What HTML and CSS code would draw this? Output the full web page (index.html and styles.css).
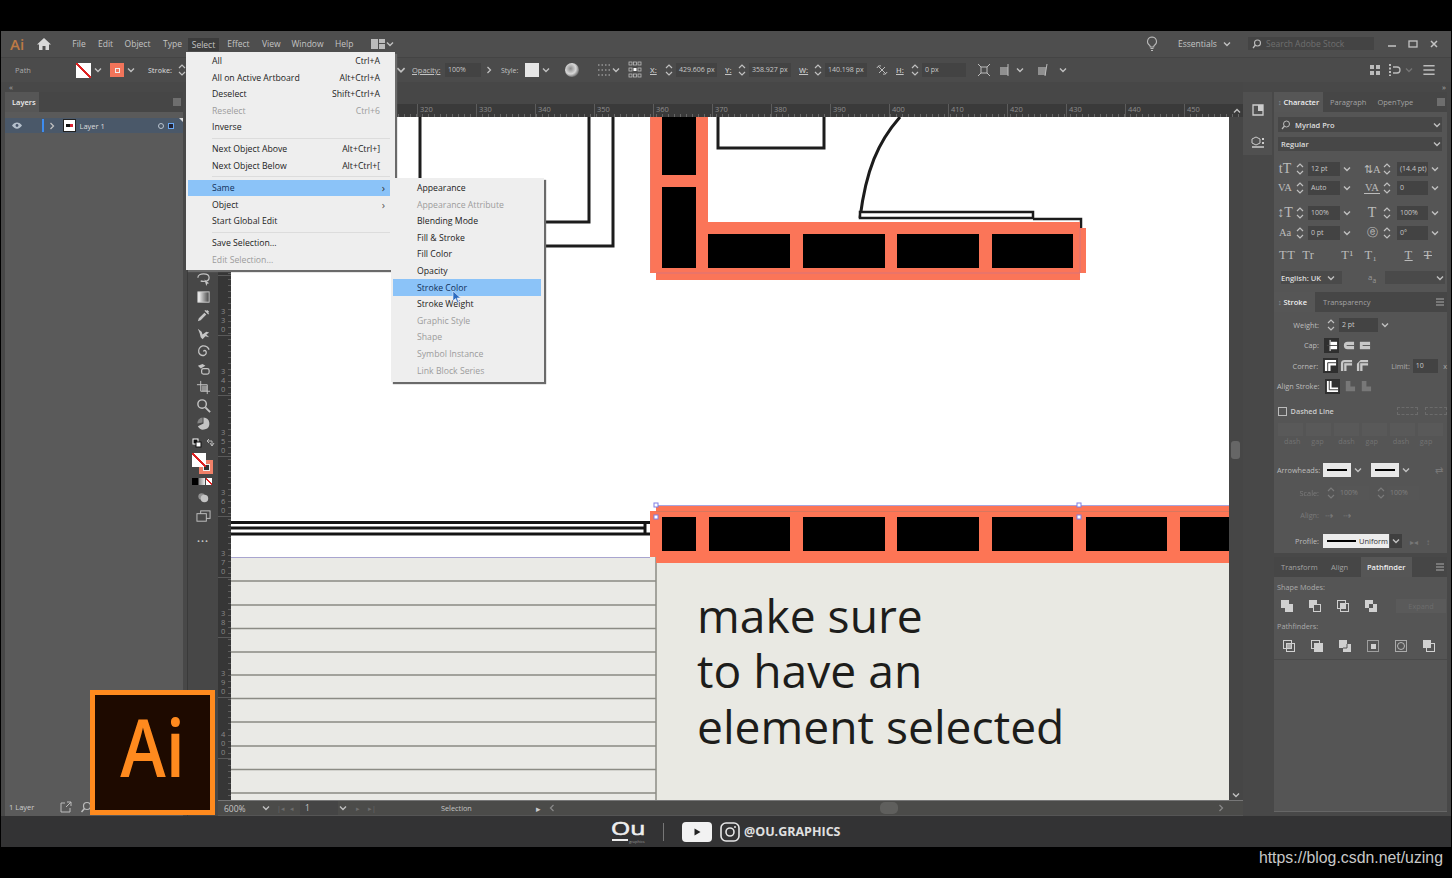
FILE: index.html
```html
<!DOCTYPE html>
<html lang="en">
<head>
  <meta charset="UTF-8">
  <title>Adobe Illustrator - Select Same</title>
  <link rel="stylesheet" href="styles.css">
</head>
<body>

<svg class="defs" width="0" height="0">
  <symbol id="chev" viewBox="0 0 10 10"><polyline points="2,3.5 5,6.5 8,3.5" fill="none" stroke="currentColor" stroke-width="1.4"/></symbol>
  <symbol id="next" viewBox="0 0 10 10"><polyline points="3.5,2 6.5,5 3.5,8" fill="none" stroke="currentColor" stroke-width="1.3"/></symbol>
  <symbol id="spin" viewBox="0 0 8 16"><polyline points="1,6 4,3 7,6" fill="none" stroke="currentColor" stroke-width="1.2"/><polyline points="1,10 4,13 7,10" fill="none" stroke="currentColor" stroke-width="1.2"/></symbol>
  <symbol id="burger" viewBox="0 0 10 10"><path d="M1 2h8M1 5h8M1 8h8" stroke="currentColor" stroke-width="1.1"/></symbol>
  <symbol id="cap1" viewBox="0 0 14 14"><path d="M6 3h7v8H6z" fill="currentColor"/><path d="M5.500 1v12" stroke="currentColor"/><path d="M2 7h11" stroke="#444"/></symbol>
  <symbol id="cap2" viewBox="0 0 14 14"><path d="M6 3h7v8H6a4 4 0 0 1 0-8z" fill="currentColor"/><path d="M5 7h8" stroke="#555"/></symbol>
  <symbol id="cap3" viewBox="0 0 14 14"><path d="M2 3h11v8H2z" fill="currentColor"/><path d="M5 7h8" stroke="#555"/></symbol>
  <symbol id="cor1" viewBox="0 0 14 14"><path d="M1 1h12v6H7v6H1z" fill="currentColor"/><path d="M4 13V4h9" fill="none" stroke="#333"/></symbol>
  <symbol id="cor2" viewBox="0 0 14 14"><path d="M5 1h8v6H7v6H1V5a4 4 0 0 1 4-4z" fill="currentColor"/><path d="M4 13V4h9" fill="none" stroke="#555"/></symbol>
  <symbol id="cor3" viewBox="0 0 14 14"><path d="M5 1h8v6H7v6H1V5z" fill="currentColor"/><path d="M4 13V4h9" fill="none" stroke="#555"/></symbol>
  <symbol id="aln1" viewBox="0 0 14 14"><path d="M1 1h5v7h7v5H1z" fill="currentColor"/><path d="M3.500 1v9.500H13" fill="none" stroke="#333"/></symbol>
  <symbol id="aln2" viewBox="0 0 14 14"><path d="M3 1h5v6h5v5H3z" fill="currentColor"/></symbol>
  <symbol id="mode1" viewBox="0 0 14 14"><path d="M1 1h8v4h4v8H5V9H1z" fill="currentColor"/></symbol>
  <symbol id="mode2" viewBox="0 0 14 14"><path d="M1 1h8v4h4v8H5V9H1z" fill="currentColor"/><rect x="6" y="6" width="6" height="6" fill="#555"/></symbol>
  <symbol id="mode3" viewBox="0 0 14 14"><rect x="1.5" y="1.5" width="8" height="8" fill="none" stroke="currentColor"/><rect x="4.5" y="4.5" width="8" height="8" fill="none" stroke="currentColor"/><rect x="5" y="5" width="4" height="4" fill="currentColor"/></symbol>
  <symbol id="mode4" viewBox="0 0 14 14"><path d="M1 1h8v4h4v8H5V9H1zM5 5v4h4V5z" fill="currentColor" fill-rule="evenodd"/></symbol>
  <symbol id="pf1" viewBox="0 0 14 14"><rect x="1.5" y="1.5" width="8" height="8" fill="none" stroke="currentColor"/><rect x="4.5" y="4.5" width="8" height="8" fill="none" stroke="currentColor"/><path d="M5 5h4v4H5z" fill="currentColor" opacity=".7"/></symbol>
  <symbol id="pf2" viewBox="0 0 14 14"><rect x="1.5" y="1.5" width="8" height="8" fill="none" stroke="currentColor"/><rect x="4" y="4" width="9" height="9" fill="currentColor"/></symbol>
  <symbol id="pf3" viewBox="0 0 14 14"><path d="M1 1h8v4h4v8H5V9H1z" fill="currentColor"/><path d="M9 5v4H5" fill="none" stroke="#555"/></symbol>
  <symbol id="pf4" viewBox="0 0 14 14"><rect x="1.5" y="1.5" width="11" height="11" fill="none" stroke="currentColor" opacity=".6"/><rect x="5" y="5" width="5" height="5" fill="currentColor"/></symbol>
  <symbol id="pf5" viewBox="0 0 14 14"><rect x="1.5" y="1.5" width="11" height="11" fill="none" stroke="currentColor" opacity=".7"/><circle cx="7" cy="7" r="3.5" fill="none" stroke="currentColor" opacity=".8"/></symbol>
  <symbol id="pf6" viewBox="0 0 14 14"><rect x="4.5" y="4.5" width="8" height="8" fill="none" stroke="currentColor"/><rect x="1" y="1" width="8" height="8" fill="currentColor"/></symbol>
</svg>

<div class="app">

  <header class="menubar">
    <span class="ai-mark">Ai</span>
    <svg class="home" viewBox="0 0 16 14"><path d="M8 1 1 7.5h2V13h3.5V9h3v4H13V7.5h2z" fill="currentColor"/></svg>
    <a class="mi m-file">File</a>
    <a class="mi m-edit">Edit</a>
    <a class="mi m-object">Object</a>
    <a class="mi m-type">Type</a>
    <a class="mi m-select">Select</a>
    <a class="mi m-effect">Effect</a>
    <a class="mi m-view">View</a>
    <a class="mi m-window">Window</a>
    <a class="mi m-help">Help</a>
    <svg class="ws-icon" viewBox="0 0 14 10"><path d="M0 0h7v10H0zM8 0h6v4H8zM8 5h6v5H8z" fill="currentColor"/></svg>
    <svg class="chev c10"><use href="#chev"/></svg>
    <svg class="bulb" viewBox="0 0 12 16"><path d="M6 1a4.5 4.5 0 0 0-2.5 8.2c.5.5.8 1.2.8 1.8h3.400c0-.6.3-1.300.8-1.800A4.500 4.500 0 0 0 6 1zM4.500 12.500h3M5 14.500h2" fill="none" stroke="currentColor" stroke-width="1.100"/></svg>
    <span class="mi essentials">Essentials</span>
    <svg class="chev c10 ess-chev"><use href="#chev"/></svg>
    <div class="stock">
      <svg class="lens" viewBox="0 0 12 10"><circle cx="6.500" cy="4" r="3" fill="none" stroke="currentColor" stroke-width="1.100"/><path d="M4.500 6 2 9" stroke="currentColor" stroke-width="1.300"/></svg>
      <span>Search Adobe Stock</span>
    </div>
    <svg class="win w-min" viewBox="0 0 10 10"><path d="M1 7h8" stroke="currentColor" stroke-width="1.500"/></svg>
    <svg class="win w-max" viewBox="0 0 10 10"><rect x="1" y="2" width="8" height="6" fill="none" stroke="currentColor" stroke-width="1.300"/></svg>
    <svg class="win w-close" viewBox="0 0 10 10"><path d="M2 2l6 6M8 2l-6 6" stroke="currentColor" stroke-width="1.500"/></svg>
  </header>

  <div class="controlbar">
    <span class="t-path">Path</span>
    <span class="swatch sw-none"></span>
    <svg class="chev c14"><use href="#chev"/></svg>
    <span class="swatch sw-stroke"><i></i></span>
    <svg class="chev c14"><use href="#chev"/></svg>
    <span class="t-stroke">Stroke:</span>
    <svg class="spin sp-a"><use href="#spin"/></svg>
    <svg class="chev c12 after-menu"><use href="#chev"/></svg>
    <span class="t-opacity">Opacity:</span>
    <span class="field f-opacity">100%</span>
    <svg class="chev c10 after-op"><use href="#next"/></svg>
    <span class="t-style">Style:</span>
    <span class="swatch sw-style"></span>
    <svg class="chev c14"><use href="#chev"/></svg>
    <span class="globe"></span>
    <svg class="ic14 dots-ic" viewBox="0 0 14 14"><path d="M1 2h12M1 7h12M1 12h12" stroke="currentColor" stroke-dasharray="1.500 2"/></svg>
    <svg class="chev c10"><use href="#chev"/></svg>
    <svg class="ic14 refpt" viewBox="0 0 14 18"><g fill="none" stroke="currentColor" stroke-width=".8"><rect x="1" y="1" width="3" height="3"/><rect x="5.500" y="1" width="3" height="3"/><rect x="10" y="1" width="3" height="3"/><rect x="1" y="7" width="3" height="3"/><rect x="10" y="7" width="3" height="3"/><rect x="1" y="13" width="3" height="3"/><rect x="5.500" y="13" width="3" height="3"/><rect x="10" y="13" width="3" height="3"/></g><rect x="5.500" y="7" width="3" height="3" fill="#fff"/></svg>
    <u class="coord c-x">X:</u>
    <svg class="spin sp-x"><use href="#spin"/></svg>
    <span class="field f-x">429.606 px</span>
    <u class="coord c-y">Y:</u>
    <svg class="spin sp-y"><use href="#spin"/></svg>
    <span class="field f-y">358.927 px</span>
    <u class="coord c-w">W:</u>
    <svg class="spin sp-w"><use href="#spin"/></svg>
    <span class="field f-w">140.198 px</span>
    <svg class="ic14 link-ic" viewBox="0 0 14 14"><path d="M2 5a3 3 0 0 1 4-2M12 9a3 3 0 0 1-4 2M4 10l6-6M3 3l8 8" fill="none" stroke="currentColor"/></svg>
    <u class="coord c-h">H:</u>
    <svg class="spin sp-h"><use href="#spin"/></svg>
    <span class="field f-h">0 px</span>
    <svg class="ic14 tr-ic" viewBox="0 0 14 14"><path d="M1 1l3 3M13 1l-3 3M1 13l3-3M13 13l-3-3" stroke="currentColor"/><rect x="4" y="4" width="6" height="6" fill="none" stroke="currentColor"/></svg>
    <svg class="ic14 al-ic" viewBox="0 0 14 14"><path d="M1 4h8v8H1z" fill="currentColor" opacity=".6"/><path d="M9 1v12" stroke="currentColor"/></svg>
    <svg class="chev c14"><use href="#chev"/></svg>
    <svg class="ic14 al-ic2" viewBox="0 0 14 14"><path d="M1 4h8v8H1z" fill="currentColor" opacity=".6"/><path d="M10 1l-2 12" stroke="currentColor"/></svg>
    <svg class="chev c14 ch-last"><use href="#chev"/></svg>
    <div class="ctl-right">
      <svg class="ic14" viewBox="0 0 14 14"><path d="M2 2h4v4H2zM8 2h4v4H8zM2 8h4v4H2zM8 8h4v4H8z" fill="currentColor"/></svg>
      <svg class="ic14 ctl-b" viewBox="0 0 14 14"><path d="M2 1v12" stroke="currentColor" stroke-width="2" stroke-dasharray="2 1.500"/><path d="M5 4h4a3 3 0 0 1 0 6H5" fill="none" stroke="currentColor" stroke-width="1.300"/></svg>
      <svg class="chev c10 dim ctl-c"><use href="#chev"/></svg>
      <svg class="ic14 last-burger"><use href="#burger"/></svg>
    </div>
  </div>

  <div class="workspace">

    <aside class="left-col">
      <div class="collapse">&#171;</div>
      <div class="layers">
        <div class="tabs">
          <span class="tab active">Layers</span>
          <i class="panel-menu"></i>
        </div>
        <div class="layer-row">
          <svg class="eye" viewBox="0 0 12 8"><path d="M0 4c3-5 9-5 12 0-3 5-9 5-12 0z" fill="#b5c0cc"/><circle cx="6" cy="4" r="1.700" fill="#46546a"/></svg>
          <i class="blue-line"></i>
          <svg class="chev c10 layer-arrow"><use href="#next"/></svg>
          <span class="thumb"><i></i></span>
          <span class="layer-name">Layer 1</span>
          <i class="target"></i>
          <i class="sel-box"></i>
          <i class="corner"></i>
        </div>
        <div class="layers-foot">
          <span class="foot-count">1 Layer</span>
          <svg class="ic12 foot-a" viewBox="0 0 12 12"><path d="M5 2H1v9h9V7M7 1h4v4M11 1 6 6" fill="none" stroke="currentColor"/></svg>
          <svg class="ic12 foot-b" viewBox="0 0 12 12"><circle cx="7" cy="5" r="3.500" fill="none" stroke="currentColor" stroke-width="1.200"/><path d="M4.500 7.500 1.500 11" stroke="currentColor" stroke-width="1.500"/></svg>
        </div>
      </div>
    </aside>

    <nav class="toolbox">
      <div class="tool"><svg viewBox="0 0 16 16"><path d="M2 6c0-3 3-4 6-4s6 1 6 4-3 4-6 4c-1 0-2 0-3-.5" fill="none" stroke="currentColor" stroke-width="1.300"/><path d="M9 8l5 4-2 .5L11 15z" fill="currentColor"/></svg></div>
      <div class="tool"><svg viewBox="0 0 16 16"><defs><linearGradient id="gr"><stop offset="0" stop-color="#fff"/><stop offset="1" stop-color="#444"/></linearGradient></defs><rect x="2" y="2" width="12" height="11" fill="url(#gr)" stroke="#ccc"/></svg></div>
      <div class="tool"><svg viewBox="0 0 16 16"><path d="M2 14l1-3 6-6 2 2-6 6zM9 3l1-1 1 1 1-1 2 2-1 1 1 1-1 1-4-4z" fill="currentColor"/></svg></div>
      <div class="tool"><svg viewBox="0 0 16 16"><path d="M2 3l4 3 1 3 4-3 3 1-3 2 3 3-4-1-3 3-2-2-1-4z" fill="currentColor"/></svg></div>
      <div class="tool"><svg viewBox="0 0 16 16"><path d="M8 8a1.500 1.500 0 0 1 2-1 3 3 0 0 1-1 5 5 5 0 0 1-6-3 6 6 0 0 1 4-7 7 7 0 0 1 7 4" fill="none" stroke="currentColor" stroke-width="1.400"/></svg></div>
      <div class="tool"><svg viewBox="0 0 16 16"><path d="M2 4l5-2 3 2-5 3z" fill="currentColor"/><rect x="6" y="7" width="8" height="6" rx="2" fill="none" stroke="currentColor" stroke-width="1.300"/></svg></div>
      <div class="tool"><svg viewBox="0 0 16 16"><path d="M5 1v11h10M1 5h11v10" fill="none" stroke="currentColor"/><rect x="6" y="6" width="6" height="6" fill="currentColor" opacity=".6"/></svg></div>
      <div class="tool"><svg viewBox="0 0 16 16"><circle cx="6.500" cy="6.500" r="4.500" fill="none" stroke="currentColor" stroke-width="1.500"/><path d="M10 10l5 5" stroke="currentColor" stroke-width="2"/></svg></div>
      <div class="tool"><svg viewBox="0 0 16 16"><path d="M8 8V1.500A6.500 6.500 0 1 1 2 11z" fill="currentColor"/><path d="M7 7V1.500A6 6 0 0 0 1.500 8z" fill="currentColor" opacity=".5"/></svg></div>
      <div class="swap-row">
        <svg class="mini" viewBox="0 0 10 10"><rect x="1" y="1" width="5" height="5" fill="#111" stroke="#fff"/><rect x="4" y="4" width="5" height="5" fill="#fff" stroke="#111"/></svg>
        <svg class="mini" viewBox="0 0 10 10"><path d="M2 3h5v5M5 5l2 3 2-3M2 3l2-2M2 3l2 2" fill="none" stroke="currentColor"/></svg>
      </div>
      <div class="fillstroke">
        <i class="stroke-box"><b></b></i>
        <i class="fill-box"></i>
      </div>
      <div class="color-row">
        <i class="c-black"></i><i class="c-grad"></i><i class="c-none"></i>
      </div>
      <div class="tool draw-mode"><svg viewBox="0 0 16 16"><circle cx="6" cy="7" r="3.500" fill="currentColor" opacity=".6"/><circle cx="9" cy="9" r="4" fill="currentColor"/></svg></div>
      <div class="tool screen-mode"><svg viewBox="0 0 16 16"><rect x="5" y="2" width="10" height="8" fill="none" stroke="currentColor"/><rect x="1" y="5" width="10" height="8" fill="#474747" stroke="currentColor"/></svg></div>
      <div class="tool more">&#8226;&#8226;&#8226;</div>
    </nav>

    <main class="doc">
      <div class="doc-strip"></div>
      <div class="hruler">
        <span>320</span><span>330</span><span>340</span><span>350</span><span>360</span><span>370</span><span>380</span>
        <span>390</span><span>400</span><span>410</span><span>420</span><span>430</span><span>440</span><span>450</span>
        <svg class="chev c10 ruler-up"><use href="#chev"/></svg>
      </div>
      <div class="doc-mid">
        <div class="vruler">
          <div class="vcell"></div>
          <div class="vcell"></div>
          <div class="vcell"></div>
          <div class="vcell"><span>3<br>3<br>0</span></div>
          <div class="vcell"><span>3<br>4<br>0</span></div>
          <div class="vcell"><span>3<br>5<br>0</span></div>
          <div class="vcell"><span>3<br>6<br>0</span></div>
          <div class="vcell"><span>3<br>7<br>0</span></div>
          <div class="vcell"><span>3<br>8<br>0</span></div>
          <div class="vcell"><span>3<br>9<br>0</span></div>
          <div class="vcell"><span>4<br>0<br>0</span></div>
          <div class="vcell"></div>
        </div>
        <svg class="artboard" viewBox="231 117 998 683" width="998" height="683">
          <rect x="231" y="117" width="998" height="683" fill="#fff"/>
          <!-- walls upper left -->
          <g fill="none" stroke="#1c1c1c" stroke-width="3">
            <path d="M420 117V190"/>
            <path d="M589 117V222H530"/>
            <path d="M613 117V246H530"/>
            <path d="M718 117V148H824V117"/>
            <path d="M900 117C878 142 866 170 860 218"/>
          </g>
          <path d="M860 212H1033V218H860z" fill="#fff" stroke="#1c1c1c" stroke-width="2.500"/>
          <path d="M1033 219H1081V228" fill="none" stroke="#1c1c1c" stroke-width="2.500"/>
          <!-- upper brick corner -->
          <path d="M650 117H708V222H1080V228H1086V273H1080V280H656V273H650z" fill="#fb7558"/>
          <path d="M656 273H1080M1080 228V273" fill="none" stroke="#d9747a" stroke-width="1"/>
          <path d="M650.500 117V272" fill="none" stroke="#ef7a66" stroke-width="1"/>
          <g fill="#000">
            <rect x="662" y="117" width="34" height="58"/>
            <rect x="662" y="187" width="34" height="81"/>
            <rect x="708" y="234" width="82" height="34"/>
            <rect x="803" y="234" width="82" height="34"/>
            <rect x="897" y="234" width="82" height="34"/>
            <rect x="992" y="234" width="81" height="34"/>
          </g>
          <!-- triple line to the lower wall -->
          <path d="M231 522.500H650M231 534H650M231 528H644" fill="none" stroke="#141414" stroke-width="2.800"/>
          <path d="M645 522V534" stroke="#141414" stroke-width="3"/>
          <!-- grey sheets -->
          <rect x="231" y="557" width="425" height="243" fill="#eaeae6"/>
          <rect x="656" y="563" width="573" height="237" fill="#e9e9e3"/>
          <path d="M231 557.500H650" stroke="#a8a5cf" stroke-width="1"/>
          <g stroke="#8b8b84" stroke-width="1.500">
            <path d="M231 581H656M231 605H656M231 628.500H656M231 652H656M231 675H656M231 698.500H656M231 722H656M231 746H656M231 769.500H656M231 793H656"/>
            <path d="M656 557V800"/>
          </g>
          <!-- lower brick band -->
          <path d="M656 505H1229V563H656V557H650V511H656z" fill="#fd7555"/>
          <path d="M656 511.500H1229" stroke="#d8775f" stroke-width="1"/>
          <path d="M656 505.500H1229" stroke="#a9a4de" stroke-width="1"/>
          <g fill="#000">
            <rect x="662" y="517" width="34" height="34"/>
            <rect x="709" y="517" width="81" height="34"/>
            <rect x="803" y="517" width="82" height="34"/>
            <rect x="897" y="517" width="82" height="34"/>
            <rect x="992" y="517" width="81" height="34"/>
            <rect x="1086" y="517" width="81" height="34"/>
            <rect x="1180" y="517" width="49" height="34"/>
          </g>
          <g fill="#fff" stroke="#7f7fe6" stroke-width="1">
            <rect x="654" y="503" width="4" height="4"/>
            <rect x="654" y="515" width="4" height="4"/>
            <rect x="1077" y="503" width="4" height="4"/>
            <rect x="1077" y="515" width="4" height="4"/>
          </g>
          <g class="art-text">
            <text x="697" y="633">make sure</text>
            <text x="697" y="688">to have an</text>
            <text x="697" y="744">element selected</text>
          </g>
        </svg>
        <div class="vscroll">
          <i class="thumb-v"></i>
          <svg class="chev c10"><use href="#chev"/></svg>
        </div>
      </div>
      <div class="status">
        <span class="st-zoom">600%</span>
        <svg class="chev c10 st-c1"><use href="#chev"/></svg>
        <span class="st-nav st-n1">|&#9666;</span>
        <span class="st-nav st-n2">&#9666;</span>
        <span class="st-page">1</span>
        <svg class="chev c10 st-c2"><use href="#chev"/></svg>
        <span class="st-nav st-n3">&#9656;</span>
        <span class="st-nav st-n4">&#9656;|</span>
        <span class="st-tool">Selection</span>
        <span class="st-play">&#9656;</span>
        <svg class="chev c10 st-left"><use href="#next"/></svg>
        <i class="st-thumb"></i>
        <svg class="chev c10 st-right"><use href="#next"/></svg>
      </div>
    </main>

    <aside class="dock">
      <div class="dock-block">
        <svg viewBox="0 0 14 14" class="dock-ic"><path d="M2 2h10v10H2z" fill="none" stroke="currentColor" stroke-width="1.300"/><path d="M7 2h5v6H7z" fill="currentColor"/></svg>
        <svg viewBox="0 0 14 14" class="dock-ic"><path d="M1 4l4-2 4 2v4l-4 2-4-2z" fill="none" stroke="currentColor"/><path d="M11 3h2v2h-2zM11 7h2v2h-2z" fill="currentColor"/><path d="M1 12h12" stroke="currentColor" stroke-width="1.500"/></svg>
      </div>
    </aside>

    <aside class="panels">
      <div class="collapse right">&#187;</div>

      <section class="panel p-char">
        <div class="tabs">
          <span class="tab active t-char"><em>&#8597;</em> Character</span>
          <span class="tab t-para">Paragraph</span>
          <span class="tab t-open">OpenType</span>
          <i class="panel-menu"></i>
        </div>
        <div class="char-body">
          <div class="select font-sel">
            <svg class="lens" viewBox="0 0 12 10"><circle cx="6.500" cy="4" r="3" fill="none" stroke="currentColor" stroke-width="1"/><path d="M4.500 6 2 9" stroke="currentColor" stroke-width="1.200"/></svg>
            <b>Myriad Pro</b>
            <svg class="chev c10"><use href="#chev"/></svg>
          </div>
          <div class="select style-sel">
            <b>Regular</b>
            <svg class="chev c10"><use href="#chev"/></svg>
          </div>
          <div class="num-row r1">
            <span class="gl">tT</span><svg class="spin"><use href="#spin"/></svg><span class="field fl">12 pt</span><svg class="chev c14"><use href="#chev"/></svg>
            <span class="gl gl-r small">&#8645;A</span><svg class="spin"><use href="#spin"/></svg><span class="field fr">(14.4 pt)</span><svg class="chev c14"><use href="#chev"/></svg>
          </div>
          <div class="num-row">
            <span class="gl small">VA</span><svg class="spin"><use href="#spin"/></svg><span class="field fl">Auto</span><svg class="chev c14"><use href="#chev"/></svg>
            <span class="gl gl-r small boxed">VA</span><svg class="spin"><use href="#spin"/></svg><span class="field fr">0</span><svg class="chev c14"><use href="#chev"/></svg>
          </div>
          <div class="num-row r3">
            <span class="gl">&#8597;T</span><svg class="spin"><use href="#spin"/></svg><span class="field fl">100%</span><svg class="chev c14"><use href="#chev"/></svg>
            <span class="gl gl-r">T</span><svg class="spin"><use href="#spin"/></svg><span class="field fr">100%</span><svg class="chev c14"><use href="#chev"/></svg>
          </div>
          <div class="num-row r4">
            <span class="gl small">Aa</span><svg class="spin"><use href="#spin"/></svg><span class="field fl">0 pt</span><svg class="chev c14"><use href="#chev"/></svg>
            <span class="gl gl-r small">&#9428;</span><svg class="spin"><use href="#spin"/></svg><span class="field fr">0&#176;</span><svg class="chev c14"><use href="#chev"/></svg>
          </div>
          <div class="caps-row">
            <span>TT</span><span>Tr</span><span class="cp3">T&#185;</span><span>T&#8321;</span><span class="cp5"><u>T</u></span><span><s>T</s></span>
          </div>
          <div class="lang-row">
            <span class="lang">English: UK <svg class="chev c10"><use href="#chev"/></svg></span>
            <span class="aa">a<sub>a</sub></span>
            <span class="lang-blank"><svg class="chev c10"><use href="#chev"/></svg></span>
          </div>
        </div>
      </section>

      <section class="panel p-stroke">
        <div class="tabs">
          <span class="tab active t-stroke-tab"><em>&#8597;</em> Stroke</span>
          <span class="tab t-trans">Transparency</span>
          <svg class="burger"><use href="#burger"/></svg>
        </div>
        <div class="stroke-body">
          <div class="s-row sr-weight">
            <label>Weight:</label>
            <svg class="spin sp-weight"><use href="#spin"/></svg>
            <span class="field f-weight">2 pt</span>
            <svg class="chev c14"><use href="#chev"/></svg>
          </div>
          <div class="s-row sr-btn">
            <label>Cap:</label>
            <span class="sbtn on"><svg><use href="#cap1"/></svg></span><span class="sbtn"><svg><use href="#cap2"/></svg></span><span class="sbtn"><svg><use href="#cap3"/></svg></span>
          </div>
          <div class="s-row sr-btn">
            <label>Corner:</label>
            <span class="sbtn on"><svg><use href="#cor1"/></svg></span><span class="sbtn"><svg><use href="#cor2"/></svg></span><span class="sbtn"><svg><use href="#cor3"/></svg></span>
            <span class="limit">Limit:</span><span class="field f-limit">10</span><span class="x">x</span>
          </div>
          <div class="s-row sr-btn">
            <label class="wide">Align Stroke:</label>
            <span class="sbtn on"><svg><use href="#aln1"/></svg></span><span class="sbtn off"><svg><use href="#aln2"/></svg></span><span class="sbtn off"><svg><use href="#aln2"/></svg></span>
          </div>
          <div class="dashed-row">
            <i class="check"></i><span>Dashed Line</span>
            <i class="dash-ic first"></i><i class="dash-ic"></i>
          </div>
          <div class="dash-inputs"><i></i><i></i><i></i><i></i><i></i><i></i></div>
          <div class="dash-labels"><span>dash</span><span>gap</span><span>dash</span><span>gap</span><span>dash</span><span>gap</span></div>
          <div class="s-row arrow-row">
            <label class="wide">Arrowheads:</label>
            <span class="line-sw"><i></i></span><svg class="chev c14"><use href="#chev"/></svg>
            <span class="line-sw sw2"><i></i></span><svg class="chev c14"><use href="#chev"/></svg>
            <span class="swap">&#8644;</span>
          </div>
          <div class="s-row faint-row">
            <label>Scale:</label>
            <svg class="spin"><use href="#spin"/></svg><span class="field f-scale">100%</span>
            <svg class="spin sp-scale2"><use href="#spin"/></svg><span class="field f-scale">100%</span>
          </div>
          <div class="s-row faint-row">
            <label>Align:</label><span class="al">&#8674;</span><span class="al">&#8674;</span>
          </div>
          <div class="s-row profile-row">
            <label>Profile:</label>
            <span class="profile"><i></i>Uniform</span>
            <span class="prof-chev"><svg class="chev c10"><use href="#chev"/></svg></span>
            <span class="faint pf-a">&#9656;&#9666;</span><span class="faint">&#8597;</span>
          </div>
        </div>
      </section>

      <section class="panel p-path">
        <div class="tabs">
          <span class="tab t-transform">Transform</span>
          <span class="tab t-align">Align</span>
          <span class="tab active t-pf">Pathfinder</span>
          <svg class="burger"><use href="#burger"/></svg>
        </div>
        <div class="path-body">
          <div class="pf-label">Shape Modes:</div>
          <div class="pf-row">
            <svg class="pf"><use href="#mode1"/></svg><svg class="pf"><use href="#mode2"/></svg><svg class="pf"><use href="#mode3"/></svg><svg class="pf"><use href="#mode4"/></svg>
            <span class="expand">Expand</span>
          </div>
          <div class="pf-label pf-label2">Pathfinders:</div>
          <div class="pf-row pf-row2">
            <svg class="pf"><use href="#pf1"/></svg><svg class="pf"><use href="#pf2"/></svg><svg class="pf"><use href="#pf3"/></svg><svg class="pf"><use href="#pf4"/></svg><svg class="pf"><use href="#pf5"/></svg><svg class="pf"><use href="#pf6"/></svg>
          </div>
        </div>
        <div class="panel-empty"></div>
      </section>
    </aside>
  </div>

  <footer class="channel">
    <div class="ou"><b>Ou</b><i></i><small>graphics</small></div>
    <i class="ch-sep"></i>
    <svg class="yt" viewBox="0 0 30 20"><rect width="30" height="20" rx="4" fill="#f2f2f2"/><path d="M12.500 6.500l6 3.500-6 3.500z" fill="#222"/></svg>
    <svg class="ig" viewBox="0 0 20 20"><rect x="1" y="1" width="18" height="18" rx="5" fill="none" stroke="#e6e6e6" stroke-width="1.600"/><circle cx="10" cy="10" r="4" fill="none" stroke="#e6e6e6" stroke-width="1.600"/><circle cx="15" cy="5" r="1" fill="#e6e6e6"/></svg>
    <span class="handle">@OU.GRAPHICS</span>
  </footer>

  <!-- open menus -->
  <div class="menu">
    <div class="row"><span>All</span><span>Ctrl+A</span></div>
    <div class="row"><span>All on Active Artboard</span><span>Alt+Ctrl+A</span></div>
    <div class="row"><span>Deselect</span><span>Shift+Ctrl+A</span></div>
    <div class="row off"><span>Reselect</span><span>Ctrl+6</span></div>
    <div class="row"><span>Inverse</span></div>
    <div class="sep"></div>
    <div class="row"><span>Next Object Above</span><span>Alt+Ctrl+]</span></div>
    <div class="row"><span>Next Object Below</span><span>Alt+Ctrl+[</span></div>
    <div class="sep"></div>
    <div class="row sel"><span>Same</span><span class="arr">&#8250;</span></div>
    <div class="row"><span>Object</span><span class="arr">&#8250;</span></div>
    <div class="row"><span>Start Global Edit</span></div>
    <div class="sep"></div>
    <div class="row"><span>Save Selection...</span></div>
    <div class="row off"><span>Edit Selection...</span></div>
  </div>

  <div class="submenu">
    <div class="row"><span>Appearance</span></div>
    <div class="row off"><span>Appearance Attribute</span></div>
    <div class="row"><span>Blending Mode</span></div>
    <div class="row"><span>Fill &amp; Stroke</span></div>
    <div class="row"><span>Fill Color</span></div>
    <div class="row"><span>Opacity</span></div>
    <div class="row sel"><span>Stroke Color</span></div>
    <div class="row"><span>Stroke Weight</span></div>
    <div class="row off"><span>Graphic Style</span></div>
    <div class="row off"><span>Shape</span></div>
    <div class="row off"><span>Symbol Instance</span></div>
    <div class="row off"><span>Link Block Series</span></div>
  </div>

  <svg class="cursor" viewBox="0 0 10 14"><path d="M1 1v10l2.500-2.500L5.500 13 7 12.300 5 8h3.500z" fill="#2d6cc0" stroke="#eaf2ff" stroke-width=".6"/></svg>

  <div class="ai-badge"><span>Ai</span></div>
</div>

<div class="watermark">https://blog.csdn.net/uzing</div>

</body>
</html>
```

FILE: styles.css
```css
* { box-sizing: border-box; }
body {
  margin: 0;
  padding-top: 31px;
  background-color: #000;
  font-family: "Open Sans", sans-serif;
  font-size: 8.5px;
  color: #c4c4c4;
  overflow: hidden;
}
svg { display: block; flex: none; }
.defs { position: absolute; }
i, em { font-style: normal; }

.app {
  position: relative;
  width: 1450px;
  height: 816px;
  margin-left: 1px;
  background-color: #484848;
  filter: blur(0.45px);
}

/* top bars */
.menubar {
  display: flex;
  align-items: center;
  height: 26px;
  padding-bottom: 1px;
  background-color: #4e4e4e;
  white-space: nowrap;
}
.ai-mark { margin-left: 9px; width: 16px; font-size: 15px; font-weight: 600; color: #bd7a45; }
.home { margin-left: 10px; width: 16px; height: 14px; color: #d8d8d8; }
.mi { text-align: center; }
.m-file { margin-left: 20px; width: 14px; }
.m-edit { margin-left: 12px; width: 15px; }
.m-object { margin-left: 11px; width: 27px; }
.m-type { margin-left: 12px; width: 18px; }
.m-select { margin-left: 7px; width: 31px; height: 13px; line-height: 13px; margin-top: 2px; background-color: #3c3c3c; }
.m-effect { margin-left: 8px; width: 23px; }
.m-view { margin-left: 12px; width: 17px; }
.m-window { margin-left: 12px; width: 33px; }
.m-help { margin-left: 11px; width: 18px; }
.ws-icon { margin-left: 18px; width: 14px; height: 10px; color: #bcbcbc; }
.chev { color: #c0c0c0; }
.c10 { width: 10px; height: 10px; }
.c12 { width: 12px; height: 12px; }
.c14 { width: 14px; height: 14px; padding: 2px; }
.dim { opacity: 0.35; }
.bulb { margin-left: 751px; width: 12px; height: 16px; color: #bbb; }
.essentials { margin-left: 20px; width: 38px; }
.ess-chev { margin-left: 6px; }
.stock {
  display: flex;
  align-items: center;
  gap: 3px;
  margin-left: 16px;
  width: 126px;
  height: 13px;
  padding-left: 3px;
  background-color: #444;
  color: #6f6f6f;
}
.lens { width: 12px; height: 10px; color: #bbb; }
.win { width: 10px; height: 10px; color: #c4c4c4; }
.w-min { margin-left: 13px; }
.w-max { margin-left: 11px; }
.w-close { margin-left: 11px; }

.controlbar {
  display: flex;
  align-items: center;
  height: 25px;
  background-color: #4b4b4b;
  border-top: 1px solid #444;
  font-size: 7.5px;
  white-space: nowrap;
}
.t-path { margin-left: 14px; width: 16px; color: #aaa; }
.swatch { display: block; }
.sw-none {
  margin-left: 45px;
  width: 15px;
  height: 15px;
  background: linear-gradient(to top right, #fff 46%, #d22 46% 54%, #fff 54%);
}
.sw-stroke {
  display: flex;
  align-items: center;
  justify-content: center;
  margin-left: 5px;
  width: 14px;
  height: 14px;
  background-color: #f2745a;
}
.sw-stroke i { width: 5px; height: 5px; border: 1px solid #eee; }
.t-stroke { margin-left: 10px; width: 26px; font-size: 7px; font-weight: 600; }
.spin { width: 8px; height: 16px; color: #c0c0c0; }
.sp-a { margin-left: 4px; }
.after-menu { margin-left: 209px; }
.t-opacity { margin-left: 5px; width: 30px; text-decoration: underline; }
.field {
  display: block;
  height: 14px;
  line-height: 14px;
  padding-left: 3px;
  background-color: #434343;
  font-size: 7px;
  color: #c8c8c8;
}
.f-opacity { margin-left: 3px; width: 36px; }
.after-op { margin-left: 3px; }
.t-style { margin-left: 7px; width: 20px; font-size: 7px; }
.sw-style { margin-left: 4px; width: 14px; height: 14px; background-color: #e6e6e6; }
.globe {
  margin-left: 12px;
  width: 14px;
  height: 14px;
  border-radius: 50%;
  background: radial-gradient(circle at 40% 40%, #8a8a8a, #d8d8d8 45%, #666 75%);
}
.ic14 { width: 14px; height: 14px; color: #bcbcbc; }
.ic12 { width: 12px; height: 12px; color: #bcbcbc; }
.dots-ic { margin-left: 18px; }
.refpt { margin-left: 7px; height: 18px; }
.coord { display: block; width: 9px; font-weight: 600; }
.c-x { margin-left: 8px; }
.sp-x { margin-left: 6px; }
.f-x { margin-left: 3px; width: 41px; }
.c-y { margin-left: 8px; }
.sp-y { margin-left: 4px; }
.f-y { margin-left: 3px; width: 42px; }
.c-w { margin-left: 8px; }
.sp-w { margin-left: 6px; }
.f-w { margin-left: 3px; width: 42px; }
.link-ic { margin-left: 8px; }
.c-h { margin-left: 7px; }
.sp-h { margin-left: 6px; }
.f-h { margin-left: 3px; width: 44px; }
.tr-ic { margin-left: 11px; }
.al-ic { margin-left: 8px; }
.al-ic2 { margin-left: 10px; }
.ch-last { margin-left: 5px; }
.ctl-right {
  display: flex;
  align-items: center;
  margin-left: auto;
  padding-right: 15px;
}
.ctl-b { margin-left: 6px; }
.ctl-c { margin-left: 2px; }
.last-burger { margin-left: 8px; }

/* workspace */
.workspace { display: flex; height: 734px; }
.collapse {
  height: 10px;
  line-height: 9px;
  padding-left: 8px;
  font-size: 8px;
  color: #aaa;
}
.collapse.right { text-align: right; padding: 0 5px 0 0; }

.left-col { width: 186px; display: flex; flex-direction: column; }
.layers {
  flex: 1;
  display: flex;
  flex-direction: column;
  margin: 0 4px;
  background-color: #5a5a5a;
  font-size: 7.5px;
}
.tabs {
  display: flex;
  align-items: stretch;
  height: 20px;
  background-color: #464646;
  font-size: 7.5px;
  white-space: nowrap;
}
.tab { line-height: 21px; color: #a2a2a2; }
.tab.active { background-color: #565656; color: #eee; font-weight: 600; }
.layers .tab { width: 34px; padding-left: 7px; }
.panel-menu { width: 8px; height: 8px; margin: 6px 2px 0 auto; background-color: #6e6e6e; }
.layer-row {
  position: relative;
  display: flex;
  align-items: center;
  height: 15px;
  margin-top: 6px;
  background-color: #4a5869;
}
.eye { margin-left: 7px; width: 10px; height: 7px; }
.blue-line { margin-left: 20px; width: 1.5px; height: 13px; background-color: #3d8cf0; }
.layer-arrow { margin-left: 3px; }
.thumb {
  display: flex;
  align-items: center;
  justify-content: center;
  margin-left: 6px;
  width: 13px;
  height: 13px;
  background-color: #fff;
  border: 1px solid #222;
}
.thumb i { width: 7px; height: 3px; background: linear-gradient(90deg, #111 60%, #d23 60%); }
.layer-name { margin-left: 4px; width: 25px; color: #ddd; white-space: nowrap; }
.target { margin-left: 53px; width: 6px; height: 6px; border: 1px solid #b9c4d0; border-radius: 50%; }
.sel-box { margin-left: 4px; width: 6px; height: 6px; border: 1.500px solid #6aa9f5; background-color: #223; }
.corner { position: absolute; top: 0; right: 0; border-top: 4px solid #ddd; border-left: 4px solid transparent; }
.layers-foot {
  display: flex;
  align-items: center;
  margin-top: auto;
  height: 16px;
  padding-left: 4px;
  margin-bottom: 1px;
  color: #ccc;
}
.foot-count { width: 26px; white-space: nowrap; }
.foot-a { margin-left: 25px; }
.foot-b { margin-left: 8px; }

.toolbox {
  width: 31px;
  padding-top: 188px;
  background-color: #474747;
  border-left: 1px solid #3a3a3a;
}
.tool { display: flex; align-items: center; justify-content: center; height: 18px; color: #c4c4c4; }
.tool svg { width: 15px; height: 15px; }
.swap-row { display: flex; justify-content: space-between; height: 14px; margin-top: 4px; padding: 2px 3px 0 4px; color: #bbb; }
.mini { width: 10px; height: 10px; }
.fillstroke { position: relative; height: 24px; margin-top: 2px; }
.fill-box {
  position: absolute;
  top: 1px;
  left: 4px;
  width: 14px;
  height: 14px;
  background: linear-gradient(to top right, #fff 45%, #d22 45% 55%, #fff 55%);
}
.stroke-box {
  position: absolute;
  top: 8px;
  left: 11px;
  display: flex;
  align-items: center;
  justify-content: center;
  width: 14px;
  height: 14px;
  background-color: #f08068;
}
.stroke-box b { width: 7px; height: 7px; background-color: #333; border: 1px solid #eee; }
.color-row { display: flex; gap: 1px; height: 9px; margin-top: 2px; padding-left: 4px; }
.color-row i { width: 6px; height: 7px; }
.c-black { background-color: #000; }
.c-grad { background: linear-gradient(90deg, #888, #eee); }
.c-none { background: linear-gradient(to top right, #fff 42%, #d22 42% 58%, #fff 58%); }
.draw-mode { margin-top: 2px; height: 16px; }
.screen-mode { margin-top: 3px; height: 16px; }
.more { margin-top: 8px; height: 16px; font-size: 8px; letter-spacing: 1px; }

.doc { width: 1025px; display: flex; flex-direction: column; }
.doc-strip { height: 22px; background-color: #474747; }
.hruler {
  position: relative;
  display: flex;
  height: 13px;
  padding-left: 199px;
  background-color: #3a3a3a;
  background-image: repeating-linear-gradient(90deg, #666 0 1px, transparent 1px 6px);
  background-size: 100% 3px;
  background-position: bottom;
  background-repeat: no-repeat;
  font-size: 7.5px;
  color: #8d8d8d;
}
.hruler span { width: 60.400px; padding-left: 2px; border-left: 1px solid #5c5c5c; line-height: 11px; }
.ruler-up { position: absolute; top: 2px; right: 1px; transform: rotate(180deg); }
.doc-mid { display: flex; height: 683px; }
.vruler {
  width: 13px;
  overflow: hidden;
  background-color: #363636;
  background-image: repeating-linear-gradient(#5c5c5c 0 1px, transparent 1px 6px);
  background-size: 3px 100%;
  background-position: right;
  background-repeat: no-repeat;
  font-size: 7.5px;
  color: #8a8a8a;
}
.vcell {
  display: flex;
  flex-direction: column;
  justify-content: flex-end;
  height: 60.400px;
  padding: 0 0 1px 3px;
  border-bottom: 1px solid #5a5a5a;
  line-height: 9px;
}
.vcell:first-child { margin-top: -22.600px; }
.artboard { display: block; }
.art-text { font-family: "Open Sans", sans-serif; font-size: 46.2px; fill: #1d1d1b; }
.vscroll {
  position: relative;
  width: 14px;
  background-color: #464646;
}
.thumb-v { position: absolute; top: 324px; left: 2px; width: 9px; height: 18px; border-radius: 3px; background-color: #666; }
.vscroll .chev { position: absolute; bottom: 0; left: 2px; }

.status {
  display: flex;
  align-items: center;
  height: 16px;
  background-color: #4b4b49;
  border-top: 1px solid #777;
  border-bottom: 1px solid #555;
  white-space: nowrap;
}
.st-zoom { margin-left: 6px; width: 24px; }
.st-c1 { margin-left: 13px; }
.st-nav { color: #6d6d6d; font-size: 7px; }
.st-n1 { margin-left: 6px; width: 10px; }
.st-n2 { margin-left: 3px; width: 6px; }
.st-page {
  margin-left: 4px;
  width: 38px;
  height: 14px;
  line-height: 14px;
  padding-left: 5px;
  background-color: #454545;
}
.st-c2 { margin-left: 0; }
.st-n3 { margin-left: 8px; width: 6px; }
.st-n4 { margin-left: 6px; width: 10px; }
.st-tool { margin-left: 63px; width: 33px; font-size: 7.3px; }
.st-play { margin-left: 62px; width: 8px; color: #ccc; }
.st-left { margin-left: 3px; transform: rotate(180deg); color: #888; }
.st-thumb { margin-left: 323px; width: 18px; height: 12px; border-radius: 5px; background-color: #5f5f5d; }
.st-right { margin-left: 318px; color: #888; }

.dock { width: 30px; padding-top: 10px; background-color: #484848; }
.dock-block {
  display: flex;
  flex-direction: column;
  align-items: center;
  gap: 18px;
  width: 29px;
  height: 63px;
  padding-top: 11px;
  background-color: #505050;
}
.dock-ic { width: 14px; height: 14px; color: #ccc; }

/* right panels */
.panels { display: flex; flex-direction: column; width: 178px; }
.panel { width: 173px; margin-left: 1px; white-space: nowrap; font-size: 7.3px; }
.panel em { color: #999; font-size: 7px; }
.t-char { width: 49px; padding-left: 4px; }
.t-para { margin-left: 7px; }
.t-open { margin-left: 11px; }
.burger { margin: 5px 2px 0 auto; width: 10px; height: 10px; color: #aaa; }
.char-body { height: 180px; background-color: #555; padding-top: 5px; }
.select {
  display: flex;
  align-items: center;
  height: 15px;
  margin: 0 5px 0 4px;
  background-color: #474747;
  color: #ddd;
  font-weight: 600;
}
.select b { font-weight: 600; margin-left: 3px; font-size: 7.5px; }
.select .lens { margin-left: 2px; }
.select .chev { margin-left: auto; }
.style-sel { margin-top: 5px; height: 14px; }
.num-row { display: flex; align-items: center; height: 19px; padding-left: 3px; }
.r1 { margin-top: 8px; }
.r3 { margin-top: 6px; }
.r4 { margin-top: 1px; }
.gl {
  width: 16px;
  font-family: "Liberation Serif", serif;
  font-size: 14px;
  color: #bbb;
  text-align: center;
}
.gl.small { font-size: 10.5px; }
.gl-r { margin-left: 10px; }
.boxed { border-bottom: 1px solid #bbb; }
.num-row .spin { margin: 0 3px; }
.fl { margin-left: 1px; width: 32px; }
.fr { margin-left: 3px; width: 31px; }
.caps-row {
  display: flex;
  height: 18px;
  margin-top: 4px;
  padding-left: 5px;
  font-family: "Liberation Serif", serif;
  font-size: 12.5px;
  letter-spacing: 0.5px;
  line-height: 18px;
  color: #bbb;
}
.caps-row span { width: 24px; }
.caps-row .cp3 { margin-left: 16px; }
.caps-row .cp5 { margin-left: 17px; width: 20px; }
.lang-row { display: flex; align-items: center; height: 19px; margin-top: 4px; padding-left: 7px; }
.lang { display: flex; align-items: center; width: 61px; height: 13px; font-weight: 600; color: #ddd; background-color: #4a4a4a; font-size: 7.5px; }
.lang .chev { margin-left: 5px; }
.aa { margin-left: 26px; color: #999; font-size: 8px; }
.lang-blank { display: flex; justify-content: flex-end; align-items: center; margin-left: 9px; width: 60px; height: 13px; background-color: #4a4a4a; }
.p-stroke .tab.active { width: 41px; padding-left: 4px; }
.t-trans { margin-left: 8px; }
.stroke-body { height: 241px; background-color: #555; padding-top: 3px; }
.s-row { display: flex; align-items: center; height: 20.300px; white-space: nowrap; }
.s-row label { width: 45px; text-align: right; color: #bdbdbd; }
.s-row label.wide { width: 46px; text-align: left; padding-left: 3px; }
.sp-weight { margin: 0 4px 0 8px; }
.f-weight { width: 39px; }
.sbtn {
  display: flex;
  align-items: center;
  justify-content: center;
  margin-left: 1.500px;
  width: 15px;
  height: 15px;
  color: #c8c8c8;
}
.sbtn:first-of-type { margin-left: 5px; }
.sbtn svg { width: 13px; height: 13px; }
.sbtn.on { background-color: #2f2f2f; color: #fff; }
.sbtn.off { opacity: 0.3; }
.limit { margin-left: 21px; width: 22px; color: #aaa; }
.f-limit { width: 26px; }
.x { margin-left: 5px; color: #aaa; }
.dashed-row { display: flex; align-items: center; height: 18px; margin-top: 6px; padding-left: 4px; color: #ccc; font-weight: 600; }
.dashed-row span { width: 42px; }
.check { width: 9px; height: 9px; margin-right: 4px; border: 1px solid #bbb; }
.dash-ic { width: 23px; height: 8px; margin-left: 7px; border: 1px dashed #6b6b6b; }
.dash-ic.first { margin-left: 64px; }
.dash-inputs { display: flex; gap: 3px; height: 13px; margin: 3px 0 0 4px; }
.dash-inputs i { width: 25px; background-color: #595959; }
.dash-labels { display: flex; height: 12px; padding-left: 10px; color: #727272; }
.dash-labels span { width: 28px; }
.arrow-row { margin-top: 12px; }
.line-sw { display: flex; align-items: center; justify-content: center; margin-left: 3px; width: 28px; height: 14px; background-color: #e8e8e8; }
.line-sw i { width: 20px; height: 2px; background-color: #000; }
.sw2 { margin-left: 6px; }
.swap { margin-left: 22px; color: #777; font-size: 10px; }
.faint-row { margin-top: 2px; opacity: 0.35; }
.faint-row .spin { margin-left: 8px; }
.f-scale { margin-left: 2px; width: 32px; background-color: #5a5a5a; }
.sp-scale2 { margin-left: 6px; }
.al { margin-left: 6px; width: 12px; font-size: 10px; }
.profile-row { margin-top: 6px; }
.profile {
  display: flex;
  align-items: center;
  margin-left: 4px;
  width: 66px;
  height: 14px;
  background-color: #ececec;
  color: #333;
  font-size: 7.5px;
}
.profile i { width: 29px; height: 2px; margin: 0 3px 0 4px; background-color: #000; }
.prof-chev { display: flex; align-items: center; justify-content: center; margin-left: 1px; width: 12px; height: 14px; background-color: #3f3f3f; }
.faint { color: #777; font-size: 8px; }
.pf-a { margin: 0 8px; }
.p-path .tabs { margin-top: 4px; }
.t-transform { padding-left: 7px; width: 44px; }
.t-align { margin-left: 13px; width: 27px; }
.p-path .tab.active { width: 51px; padding-left: 6px; margin-left: 3px; }
.path-body { height: 83px; background-color: #555; padding-top: 5px; border-bottom: 1px solid #4a4a4a; }
.pf-label { height: 10px; line-height: 10px; padding-left: 3px; color: #aaa; }
.pf-label2 { margin-top: 5px; }
.pf-row { display: flex; align-items: center; gap: 14px; height: 20px; margin-top: 4px; padding-left: 6px; }
.pf { width: 14px; height: 14px; color: #d0d0d0; }
.expand { margin-left: 4px; width: 50px; text-align: center; color: #6c6c6c; background-color: #5a5a5a; line-height: 14px; }
.pf-row2 { margin-top: 5px; padding-left: 8px; }
.panel-empty { height: 152px; background-color: #555; border-bottom: 1px solid #666; }

/* channel bar */
.channel {
  display: flex;
  align-items: center;
  height: 31px;
  padding-left: 610px;
  background-color: #333334;
  color: #e6e6e6;
}
.ou { position: relative; width: 36px; height: 22px; }
.ou b {
  position: absolute;
  top: -2px;
  left: 0;
  font-size: 19px;
  font-weight: 400;
  line-height: 18px;
  -webkit-text-stroke: 0.6px #eee;
  color: #eee;
  transform: scaleX(1.3);
  transform-origin: left;
}
.ou i { position: absolute; bottom: 2px; left: 1px; width: 16px; height: 2px; background-color: #eee; }
.ou small { position: absolute; bottom: -1px; left: 18px; font-size: 4px; line-height: 5px; color: #999; }
.ch-sep { margin-left: 16px; width: 1px; height: 18px; background-color: #777; }
.yt { margin-left: 18px; width: 30px; height: 20px; }
.ig { margin-left: 8px; width: 20px; height: 20px; }
.handle { margin-left: 4px; font-size: 12.5px; font-weight: 700; color: #e0e0e0; white-space: nowrap; }

/* menus */
.menu, .submenu {
  position: absolute;
  z-index: 5;
  background-color: #eeeeee;
  box-shadow: 2px 2px 1px #6a6a6a;
  font-size: 8.7px;
  color: #222;
}
.menu { top: 21px; left: 185px; width: 209px; height: 218px; padding-top: 0.700px; }
.submenu { top: 147px; left: 390px; width: 153px; height: 204px; padding-top: 1.700px; z-index: 6; }
.row {
  display: flex;
  justify-content: space-between;
  align-items: center;
  height: 16.600px;
  padding: 0 15px 0 26px;
  white-space: nowrap;
}
.row.off { color: #9c9c9c; }
.row.sel { margin: 0 5px 0 2px; padding: 0 5px 0 24px; background-color: #8bc3f8; color: #10305a; }
.submenu .row.sel { margin: 0 3px 0 2px; padding-left: 24px; }
.arr { font-size: 11px; color: #555; }
.sel .arr { color: #333; }
.row:has(.arr):not(.sel) { padding-right: 10px; }
.sep {
  height: 5.4px;
  margin: 0 5px 0 26px;
  background: linear-gradient(#dcdcdc, #dcdcdc) center / 100% 1px no-repeat;
}
.cursor { position: absolute; z-index: 7; top: 259px; left: 451px; width: 10px; height: 14px; }

.ai-badge {
  position: absolute;
  z-index: 4;
  top: 659px;
  left: 89px;
  width: 125px;
  height: 125px;
  border: 5px solid #ff8a1e;
  background-color: #1e0a00;
  overflow: hidden;
}
.ai-badge span {
  display: block;
  margin-top: 1px;
  text-align: center;
  font-family: "Open Sans", sans-serif;
  font-size: 80px;
  font-weight: 600;
  line-height: 100px;
  color: #ff8a1e;
  transform: scaleX(0.86);
}

.watermark {
  height: 31px;
  padding-right: 9px;
  text-align: right;
  font-family: "Liberation Sans", sans-serif;
  font-size: 15.85px;
  line-height: 22px;
  color: #c8c8c8;
}
```
